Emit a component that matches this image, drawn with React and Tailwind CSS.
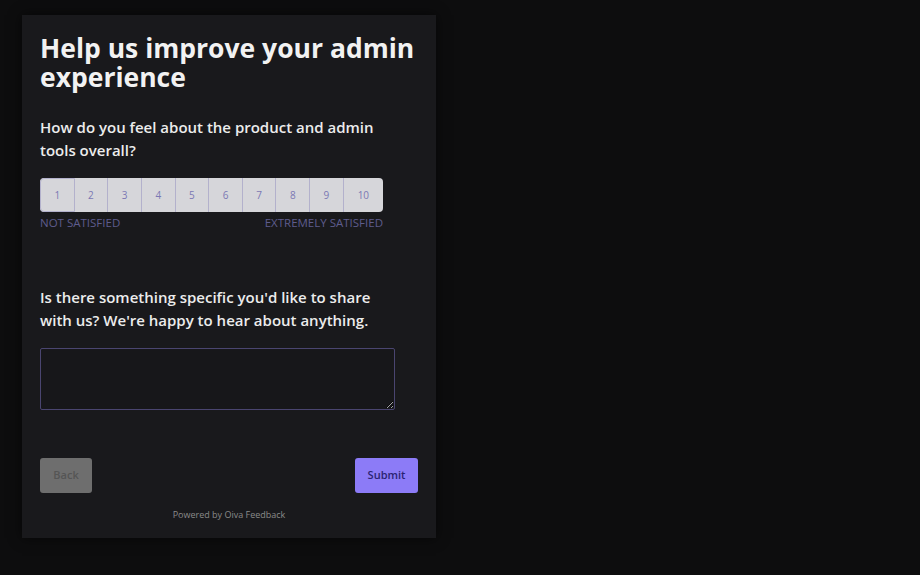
import React, { useState } from 'react'

const App = () => {
  const [score, setScore] = useState(null)
  const [comment, setComment] = useState("")

  return (
    <div className="min-h-screen w-full bg-[#0d0d0e] pt-[15px] pl-[22px]" style={{ fontFamily: '"Open Sans", "Noto Sans", sans-serif' }}>
      <div className="w-[414px] h-[523px] bg-[#19191c] shadow-[0_0_12px_rgba(0,0,0,0.6)] px-[18px] pt-[19px] flex flex-col">
        <h1 className="text-[26.5px] leading-[29px] font-bold text-[#f2f2f2] -mr-[10px]">
          Help us improve your admin experience
        </h1>

        <p className="mt-[24px] w-[335px] text-[15px] leading-[23px] font-semibold text-[#ececec]">
          How do you feel about the product and admin tools overall?
        </p>

        <div className="mt-[16px] w-[343px]">
          <div className="flex h-[34px] rounded-[4px] overflow-hidden bg-[#d6d6da]">
            {[1, 2, 3, 4, 5, 6, 7, 8, 9, 10].map((n) => (
              <button
                key={n}
                onClick={() => setScore(n)}
                className={
                  "flex-1 flex items-center justify-center text-[10px] text-[#7b78b4] border-r border-[#b3b1cc] last:border-r-0 " +
                  (n === 1 ? "border border-[#8a87d0] rounded-l-[4px] " : "") +
                  (n === 10 ? "flex-[1.2] " : "") +
                  (score === n ? "bg-[#c5c2ee]" : "")
                }
              >
                {n}
              </button>
            ))}
          </div>
          <div className="flex justify-between mt-[4px] text-[11.5px] leading-[14px] text-[#5e5c8c] uppercase">
            <span>Not satisfied</span>
            <span>Extremely satisfied</span>
          </div>
        </div>

        <p className="mt-[56px] w-[335px] text-[15px] leading-[23px] font-semibold text-[#ececec]">
          Is there something specific you'd like to share with us? We're happy to hear about anything.
        </p>

        <textarea
          value={comment}
          onChange={(e) => setComment(e.target.value)}
          className="mt-[16px] w-[355px] h-[62px] bg-[#17171a] border border-[#4a4570] rounded-[2px] text-[#ddd] text-sm p-2 outline-none"
        />

        <div className="flex justify-between items-center mt-[48px]">
          <button className="w-[52px] h-[35px] rounded-[3px] bg-[#6e6e6e] text-[11px] text-[#555] font-semibold">
            Back
          </button>
          <button className="w-[63px] h-[35px] rounded-[3px] bg-[#8c7bf7] text-[11px] text-[#2b2372] font-semibold">
            Submit
          </button>
        </div>

        <p className="mt-[15px] text-center text-[9px] text-[#8a8a8a]">
          Powered by Oiva Feedback
        </p>
      </div>
    </div>
  )
}

export default App
